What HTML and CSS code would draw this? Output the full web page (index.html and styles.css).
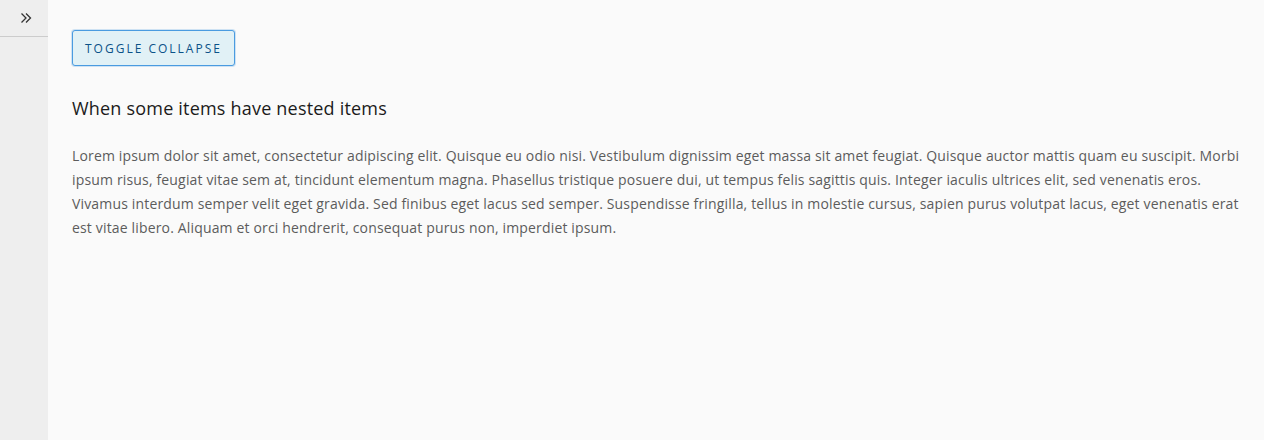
FILE: index.html
```html
<!DOCTYPE html>
<html>
<head>
<meta charset="utf-8">
<link rel="stylesheet" href="styles.css">
</head>
<body>
<div class="layout">
  <nav class="sidenav">
    <button class="nav-trigger" aria-label="Expand">
      <svg width="16" height="16" viewBox="0 0 16 16" fill="none" stroke="#333" stroke-width="1.3">
        <path d="M3.5 3.5 L8 8 L3.5 12.5"/>
        <path d="M8 3.5 L12.5 8 L8 12.5"/>
      </svg>
    </button>
  </nav>
  <main class="content">
    <button class="btn-toggle">Toggle Collapse</button>
    <h3 class="title">When some items have nested items</h3>
    <p class="text">Lorem ipsum dolor sit amet, consectetur adipiscing elit. Quisque eu odio nisi. Vestibulum dignissim eget massa sit amet feugiat. Quisque auctor mattis quam eu suscipit. Morbi ipsum risus, feugiat vitae sem at, tincidunt elementum magna. Phasellus tristique posuere dui, ut tempus felis sagittis quis. Integer iaculis ultrices elit, sed venenatis eros. Vivamus interdum semper velit eget gravida. Sed finibus eget lacus sed semper. Suspendisse fringilla, tellus in molestie cursus, sapien purus volutpat lacus, eget venenatis erat est vitae libero. Aliquam et orci hendrerit, consequat purus non, imperdiet ipsum.</p>
  </main>
</div>
</body>
</html>
```
FILE: styles.css
```css
html, body {
  margin: 0;
  padding: 0;
  height: 100%;
}
body {
  font-family: "Open Sans", "Liberation Sans", sans-serif;
  background: #fafafa;
}
.layout {
  display: flex;
  height: 100%;
}
.sidenav {
  width: 48px;
  flex: none;
  background: #eeeeee;
}
.nav-trigger {
  display: flex;
  align-items: center;
  justify-content: center;
  width: 100%;
  height: 37px;
  padding: 0 0 0 4px;
  margin: 0;
  border: none;
  border-bottom: 1px solid #cccccc;
  background: transparent;
  box-sizing: border-box;
}
.content {
  flex: 1;
  padding: 30px 24px 24px 24px;
}
.btn-toggle {
  display: block;
  height: 36px;
  padding: 0 12px;
  margin: 0;
  border: 1px solid #4a9be0;
  border-radius: 3px;
  background: #e1f1f6;
  color: #0b5288;
  font-family: "Open Sans", "Liberation Sans", sans-serif;
  font-size: 12px;
  font-weight: 500;
  letter-spacing: 2px;
  text-transform: uppercase;
  box-shadow: 0 0 0 1px rgba(74,155,224,0.25);
}
.title {
  margin: 30px 0 0 0;
  font-size: 18px;
  line-height: 24px;
  font-weight: 400;
  letter-spacing: 0.2px;
  color: #1b1b1b;
}
.text {
  margin: 24px 0 0 0;
  font-size: 14px;
  line-height: 24px;
  letter-spacing: 0.16px;
  color: #5c5c5c;
}
```
